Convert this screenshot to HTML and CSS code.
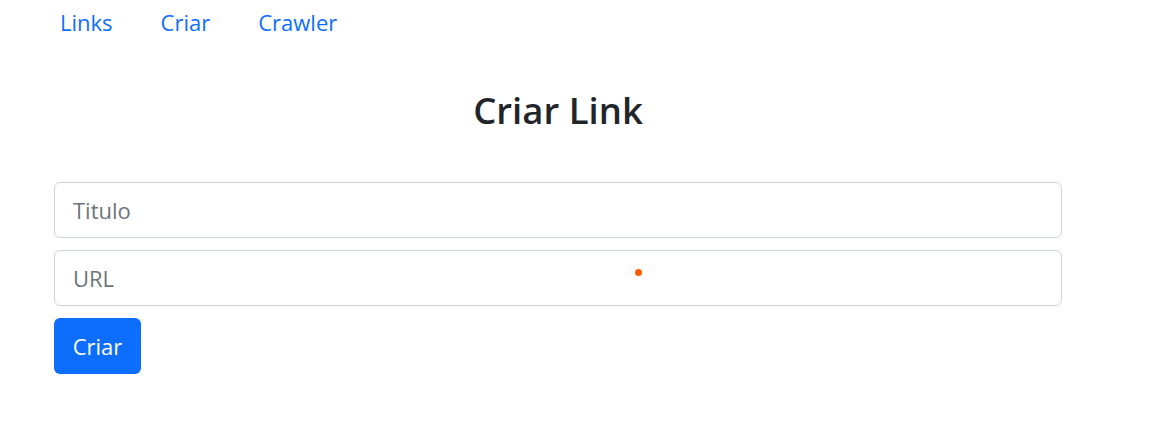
FILE: index.html
```html
<!DOCTYPE html>
<html lang="pt">
<head>
<meta charset="utf-8">
<title>Criar Link</title>
<link rel="stylesheet" href="styles.css">
</head>
<body>
<nav class="nav">
  <a class="nav-link" href="#">Links</a>
  <a class="nav-link" href="#">Criar</a>
  <a class="nav-link" href="#">Crawler</a>
</nav>
<main class="container">
  <h2 class="title">Criar Link</h2>
  <form class="form">
    <input class="field" type="text" placeholder="Titulo">
    <input class="field" type="text" placeholder="URL">
    <div><button class="btn" type="button">Criar</button></div>
  </form>
</main>
<span class="cursor-dot"></span>
</body>
</html>
```
FILE: styles.css
```css
* { box-sizing: border-box; }
html, body { margin: 0; padding: 0; }
body {
  font-family: "Open Sans", "Noto Sans", sans-serif;
  color: #212529;
  background: #fff;
  position: relative;
  height: 436px;
  overflow: hidden;
}
.nav {
  display: flex;
  gap: 48px;
  padding: 5px 0 0 60px;
}
.nav-link {
  color: #0d6efd;
  text-decoration: none;
  font-size: 22px;
  line-height: 35px;
}
.container {
  width: 1008px;
  margin-left: 54px;
}
.title {
  text-align: center;
  font-size: 36.5px;
  font-weight: 600;
  margin: 48px 0 0;
  line-height: 44px;
}
.form {
  display: flex;
  flex-direction: column;
  gap: 12px;
  margin-top: 50px;
}
.field {
  width: 100%;
  height: 56px;
  border: 1px solid #ced4da;
  border-radius: 6px;
  padding: 0 18px;
  font-family: inherit;
  font-size: 22px;
  color: #212529;
  outline: none;
}
.field::placeholder { color: #6c757d; }
.btn {
  height: 56px;
  width: 87px;
  background: #0d6efd;
  border: none;
  border-radius: 6px;
  color: #fff;
  font-family: inherit;
  font-size: 22px;
  padding: 0;
}
.cursor-dot {
  position: absolute;
  left: 635px;
  top: 269px;
  width: 7px;
  height: 7px;
  border-radius: 50%;
  background: #ff5a00;
}
```
